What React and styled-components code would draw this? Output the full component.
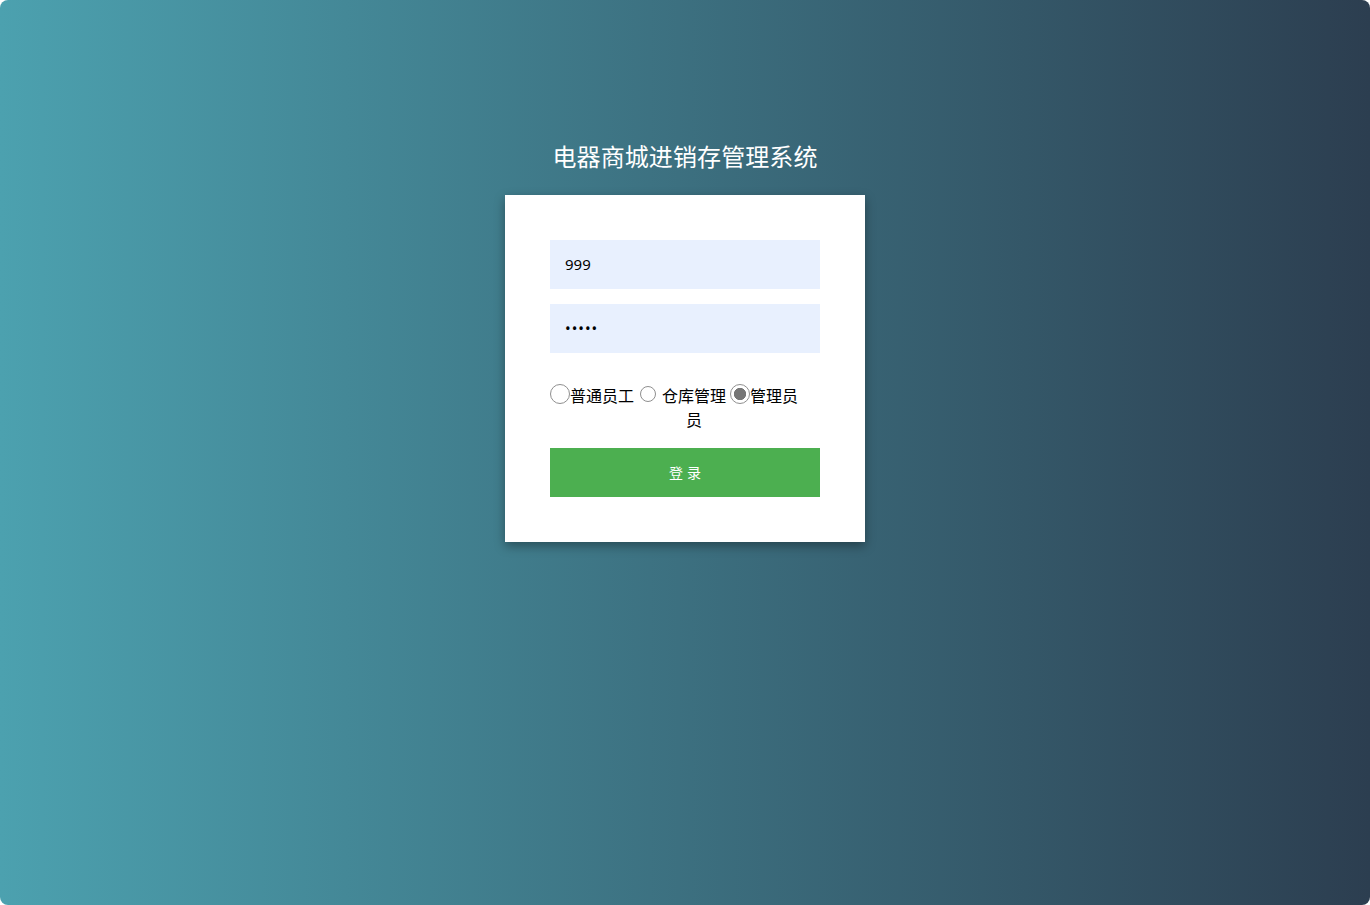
import React, { useState } from 'react';
import styled, { createGlobalStyle } from 'styled-components';

const GlobalStyle = createGlobalStyle`
  html, body {
    margin: 0;
    padding: 0;
    background: #ffffff;
  }
  body {
    font-family: "Noto Sans CJK SC", "Noto Sans", "Liberation Sans", sans-serif;
  }
  * {
    box-sizing: border-box;
  }
`;

const Page = styled.div`
  height: 100vh;
  border-radius: 8px;
  overflow: hidden;
  background: linear-gradient(to right, #4ca1af, #2c3e50);
  display: flex;
  flex-direction: column;
  align-items: center;
  padding-top: 139px;
`;

const Title = styled.h1`
  margin: 0 0 22px;
  height: 34px;
  line-height: 34px;
  font-size: 24px;
  font-weight: 400;
  color: #ffffff;
  letter-spacing: 0.1px;
`;

const Card = styled.form`
  width: 360px;
  background: #ffffff;
  padding: 45px;
  box-shadow: 0 4px 10px rgba(0, 0, 0, 0.35);
  display: flex;
  flex-direction: column;
`;

const Field = styled.input`
  width: 100%;
  height: 49px;
  border: none;
  outline: none;
  background: #e8f0fe;
  padding: 0 15px 2px;
  margin-bottom: 15px;
  font-family: "Noto Sans", "Liberation Sans", sans-serif;
  font-size: 15px;
  color: #000000;
  letter-spacing: ${p => (p.type === 'password' ? '1px' : '0')};
`;

const RoleRow = styled.div`
  display: flex;
  align-items: flex-start;
  margin-top: 15px;
  font-size: 16px;
  line-height: 24px;
  color: #000000;
`;

const Radio = styled.input.attrs({ type: 'radio' })`
  appearance: none;
  -webkit-appearance: none;
  flex: none;
  margin: ${p => p.$top}px 0 0 ${p => p.$left || 0}px;
  width: ${p => p.$size}px;
  height: ${p => p.$size}px;
  border-radius: 50%;
  border: 1px solid #8f8f8f;
  background: #ffffff;
  cursor: pointer;

  &:checked {
    border-color: #8f8f8f;
    background: radial-gradient(circle, #767676 0 46%, #ffffff 50%);
  }
`;

const RoleLabel = styled.label`
  flex: none;
  width: ${p => (p.$width ? `${p.$width}px` : 'auto')};
  margin-left: ${p => p.$left || 0}px;
  text-align: center;
  cursor: pointer;
`;

const LoginButton = styled.button`
  margin-top: 17px;
  width: 100%;
  height: 49px;
  border: none;
  padding: 0 0 2px;
  background: #4caf50;
  color: #ffffff;
  font-family: "Noto Sans CJK SC", sans-serif;
  font-size: 14px;
  letter-spacing: 4px;
  text-indent: 4px;
  cursor: pointer;
`;

const roles = [
  { id: 'staff', label: '普通员工', size: 20, top: 1, left: 0 },
  { id: 'store', label: '仓库管理员', size: 16, top: 3, left: 6, width: 64, labelLeft: 6 },
  { id: 'admin', label: '管理员', size: 20, top: 1, left: 4 },
];

export default function App() {
  const [role, setRole] = useState('admin');

  return (
    <>
      <GlobalStyle />
      <Page>
        <Title>电器商城进销存管理系统</Title>
        <Card onSubmit={e => e.preventDefault()}>
          <Field type="text" defaultValue="999" />
          <Field type="password" defaultValue="12345" />
          <RoleRow>
            {roles.map(r => (
              <React.Fragment key={r.id}>
                <Radio
                  id={r.id}
                  name="role"
                  $size={r.size}
                  $top={r.top}
                  $left={r.left}
                  checked={role === r.id}
                  onChange={() => setRole(r.id)}
                />
                <RoleLabel htmlFor={r.id} $width={r.width} $left={r.labelLeft}>
                  {r.label}
                </RoleLabel>
              </React.Fragment>
            ))}
          </RoleRow>
          <LoginButton type="submit">登录</LoginButton>
        </Card>
      </Page>
    </>
  );
}
